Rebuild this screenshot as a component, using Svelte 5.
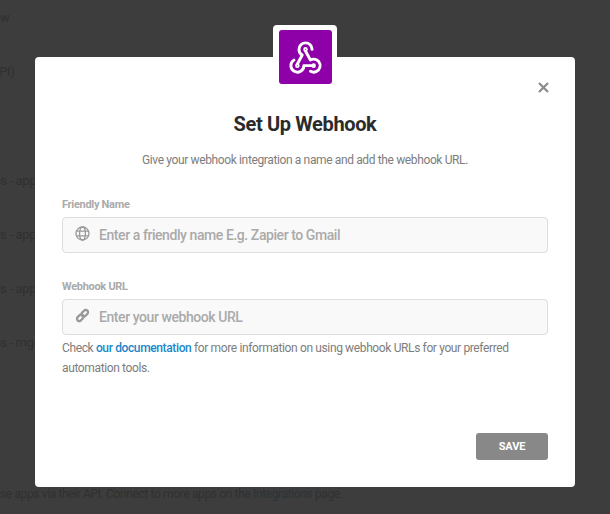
<script>
  let name = $state('');
  let url = $state('');
  const backdropRows = ['s - app1 - 8000', 's - app3 - 9000', 's - app4 - 9000', 's - mgo - 9000'];
</script>

<div class="page">
  <div class="page-head">
    <p class="w">w</p>
    <p class="api">API)</p>
  </div>
  <div class="rows">
    {#each backdropRows as row}
      <p>{row}</p>
    {/each}
  </div>
  <p class="foot">se apps via their API. Connect to more apps on the <span>Integrations</span> page.</p>
</div>

<div class="overlay">
  <div class="modal">
    <div class="logo">
      <div class="logo-inner">
        <svg width="39" height="39" viewBox="0 0 24 24" fill="none" stroke="#fff" stroke-width="1.8" stroke-linecap="round" stroke-linejoin="round">
          <path d="M4.876 13.61a4 4 0 1 0 6.124 3.39h6" />
          <path d="M15.066 20.502a4 4 0 1 0 1.934 -7.502c-.706 0 -1.424 .179 -2 .5l-3 -5.5" />
          <path d="M16.041 7a4 4 0 0 0 -8.041 0c0 1.506 .77 2.818 2 3.5l-3 5.5" />
          <circle cx="12" cy="7" r=".5" />
          <circle cx="7" cy="17" r=".5" />
          <circle cx="17" cy="17" r=".5" />
        </svg>
      </div>
    </div>

    <button class="close" aria-label="Close">
      <svg width="11" height="11" viewBox="0 0 11 11"><path d="M1 1l9 9M10 1l-9 9" stroke="#8b8b8b" stroke-width="2.2" /></svg>
    </button>

    <h2>Set Up Webhook</h2>
    <p class="sub">Give your webhook integration a name and add the webhook URL.</p>

    <label class="field">
      <span class="label">Friendly Name</span>
      <span class="input-wrap">
        <svg class="icon" width="15" height="15" viewBox="0 0 15 15" fill="none" stroke="#999" stroke-width="1.3">
          <circle cx="7.5" cy="7.5" r="6.5" />
          <ellipse cx="7.5" cy="7.5" rx="2.9" ry="6.5" />
          <path d="M1.2 5.2h12.6M1.2 9.8h12.6" />
        </svg>
        <input bind:value={name} placeholder="Enter a friendly name E.g. Zapier to Gmail" />
      </span>
    </label>

    <label class="field url">
      <span class="label">Webhook URL</span>
      <span class="input-wrap">
        <svg class="icon" width="15" height="15" viewBox="0 0 15 15" fill="none" stroke="#999" stroke-width="2.2">
          <rect x="-5.6" y="-2.3" width="7.4" height="4.6" rx="2.3" transform="translate(7.5 7.5) rotate(-45) translate(-1.3 0)" />
          <rect x="-1.8" y="-2.3" width="7.4" height="4.6" rx="2.3" transform="translate(7.5 7.5) rotate(-45) translate(1.3 0)" />
        </svg>
        <input bind:value={url} placeholder="Enter your webhook URL" />
      </span>
    </label>

    <p class="help">Check <a href="#docs">our documentation</a> for more information on using webhook URLs for your preferred automation tools.</p>

    <div class="actions">
      <button class="save">SAVE</button>
    </div>
  </div>
</div>

<style>
  :global(body) {
    margin: 0;
    background: #3d3d3d;
    font-family: Roboto, "Liberation Sans", sans-serif;
  }

  .page {
    height: 514px;
    overflow: hidden;
    color: #303030;
    font-size: 13px;
    line-height: 20px;
    letter-spacing: -0.3px;
    display: flex;
    flex-direction: column;
  }

  .page p {
    margin: 0;
    white-space: nowrap;
  }

  .page-head {
    padding-top: 8px;
  }

  .api {
    margin-top: 34px !important;
    margin-left: -9px !important;
  }

  .rows {
    margin-top: 89px;
    display: flex;
    flex-direction: column;
    gap: 34px;
  }

  .foot {
    margin-top: auto !important;
    margin-bottom: 10px !important;
    font-size: 12px;
    letter-spacing: -0.37px;
  }

  .foot span {
    color: #2b3338;
  }

  .overlay {
    position: fixed;
    inset: 0;
    padding: 57px 35px 27px;
    box-sizing: border-box;
  }

  .modal {
    position: relative;
    height: 430px;
    background: #fff;
    border-radius: 4px;
    padding: 0 27px;
    box-sizing: border-box;
    text-align: center;
    letter-spacing: -0.37px;
  }

  .logo {
    position: absolute;
    top: -32px;
    left: 238px;
    padding: 5px 5px 5px 6px;
    background: #fff;
    border-radius: 4px;
  }

  .logo-inner {
    width: 53px;
    height: 54px;
    background: #8e00a8;
    border-radius: 3px;
    display: flex;
    align-items: center;
    justify-content: center;
  }

  .close {
    position: absolute;
    top: 25px;
    right: 26px;
    width: 11px;
    height: 11px;
    padding: 0;
    border: 0;
    background: none;
    display: flex;
  }

  h2 {
    margin: 0;
    padding-top: 55px;
    font-size: 20px;
    line-height: 24px;
    font-weight: 700;
    color: #2b2b2b;
  }

  .sub {
    margin: 15px 0 0;
    font-size: 12px;
    line-height: 18px;
    color: #7d7d7d;
  }

  .field {
    display: block;
    text-align: left;
    margin-top: 29px;
  }

  .field.url {
    margin-top: 27px;
  }

  .label {
    display: block;
    font-size: 11px;
    line-height: 14px;
    font-weight: 700;
    color: #aaa;
    margin-bottom: 5px;
    letter-spacing: -0.3px;
  }

  .input-wrap {
    display: flex;
    align-items: center;
    height: 36px;
    box-sizing: border-box;
    background: #f9f9f9;
    border: 1px solid #ddd;
    border-radius: 4px;
    padding-left: 12px;
    gap: 9px;
  }

  .icon {
    flex: none;
    margin-top: -3px;
  }

  input {
    flex: 1;
    min-width: 0;
    border: 0;
    padding: 0;
    background: transparent;
    font: 500 14px Roboto, "Liberation Sans", sans-serif;
    letter-spacing: -0.43px;
    color: #555;
    outline: none;
  }

  input::placeholder {
    color: #aaa;
    opacity: 1;
  }

  .help {
    margin: 3px 0 0;
    text-align: left;
    font-size: 12px;
    line-height: 20px;
    color: #7d7d7d;
    letter-spacing: -0.37px;
  }

  .help a {
    color: #1b87c9;
    text-decoration: none;
    font-weight: 500;
  }

  .actions {
    position: absolute;
    right: 27px;
    bottom: 27px;
  }

  .save {
    width: 72px;
    height: 27px;
    border: 0;
    border-radius: 3px;
    background: #888;
    color: #fff;
    font: 700 11px Roboto, "Liberation Sans", sans-serif;
    letter-spacing: -0.1px;
    padding: 0;
  }
</style>
